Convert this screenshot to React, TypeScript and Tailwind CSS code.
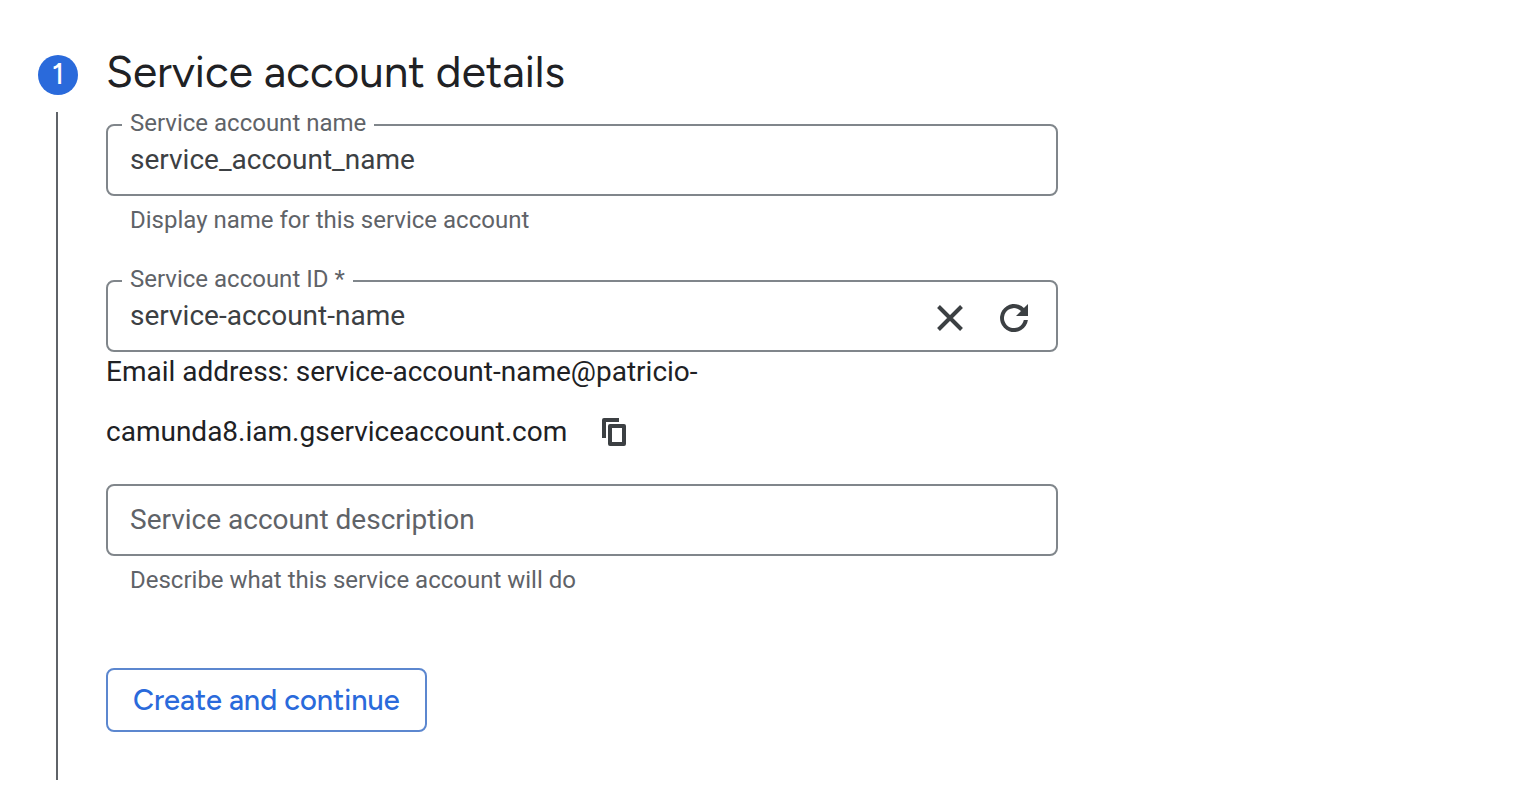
import { useState } from "react";
import type { ReactNode } from "react";

type FieldProps = {
  id: string;
  label: string;
  value: string;
  onChange: (value: string) => void;
  actions?: ReactNode;
};

function CloseIcon() {
  return (
    <svg viewBox="0 0 40 40" className="size-10" fill="none" stroke="#3c4043" strokeWidth="4" aria-hidden="true">
      <path d="M8.5 8.5 31.5 31.5M31.5 8.5 8.5 31.5" />
    </svg>
  );
}

function RefreshIcon() {
  return (
    <svg viewBox="0 0 40 40" className="size-10" fill="#3c4043" aria-hidden="true">
      <path d="M34 6V18H22L27 13A10 10 0 1 0 29.8 22H33.9A14 14 0 1 1 29.9 10.1Z" />
    </svg>
  );
}

function CopyIcon() {
  return (
    <svg viewBox="0 0 32 32" className="size-8" fill="none" stroke="#3c4043" strokeWidth="4" strokeLinejoin="round" aria-hidden="true">
      <path d="M20 4H5V22" />
      <path d="M11 10H25V28H11Z" />
    </svg>
  );
}

function OutlinedField({ id, label, value, onChange, actions }: FieldProps) {
  return (
    <fieldset className="-mt-[13px] h-[85px] min-w-0 rounded-lg border-2 border-[#80868b] pl-3.5 pr-[22px]">
      <legend className="h-7 px-2 text-2xl leading-6 text-[#5f6368]">
        <label htmlFor={id}>{label}</label>
      </legend>
      <div className="flex h-[46px] items-center pl-2">
        <input
          id={id}
          value={value}
          onChange={(e) => onChange(e.target.value)}
          className="min-w-0 flex-1 bg-transparent pb-1 text-[28px] leading-9 text-[#3c4043] outline-none"
        />
        {actions}
      </div>
    </fieldset>
  );
}

export default function App() {
  const [name, setName] = useState("service_account_name");
  const [accountId, setAccountId] = useState("service-account-name");
  const [description, setDescription] = useState("");

  return (
    <main className="flex gap-7 bg-white pt-10 pb-2 pl-[38px] pr-6 font-['Roboto',sans-serif] text-[#202124]">
      <div className="flex w-10 shrink-0 flex-col gap-[17px] pt-[15px]">
        <span className="flex size-10 items-center justify-center rounded-full bg-[#2a6adb] pb-0.5 font-['Google_Sans','Figtree','Lato',sans-serif] text-[29px] font-medium leading-10 text-white">
          1
        </span>
        <div className="ml-[18px] w-0.5 flex-1 bg-[#5f6368]" />
      </div>
      <form className="w-full max-w-[952px] pb-12" onSubmit={(e) => e.preventDefault()}>
        <h1 className="pb-5 font-['Google_Sans','Figtree','Lato',sans-serif] text-[44px] leading-16">
          Service account details
        </h1>
        <OutlinedField id="name" label="Service account name" value={name} onChange={setName} />
        <p className="pt-2 pl-6 text-2xl leading-8 text-[#5f6368]">
          Display name for this service account
        </p>
        <div className="pt-11">
          <OutlinedField
            id="account-id"
            label="Service account ID *"
            value={accountId}
            onChange={setAccountId}
            actions={
              <div className="flex gap-6">
                <button type="button" aria-label="Clear" onClick={() => setAccountId("")}>
                  <CloseIcon />
                </button>
                <button type="button" aria-label="Regenerate">
                  <RefreshIcon />
                </button>
              </div>
            }
          />
        </div>
        <div className="-mt-2.5 max-w-[640px] text-[28px] leading-[60px]">
          Email address: service-account-name@patricio-camunda8.iam.gserviceaccount.com
          <button type="button" aria-label="Copy email address" className="ml-8 pb-1 align-middle">
            <CopyIcon />
          </button>
        </div>
        <input
          aria-label="Service account description"
          placeholder="Service account description"
          value={description}
          onChange={(e) => setDescription(e.target.value)}
          className="mt-[22px] block h-[72px] w-full rounded-lg border-2 border-[#80868b] px-[22px] pb-0.5 text-[28px] text-[#3c4043] outline-none placeholder:text-[#5f6368]"
        />
        <p className="pt-2 pl-6 text-2xl leading-8 text-[#5f6368]">
          Describe what this service account will do
        </p>
        <button
          type="submit"
          className="mt-[72px] h-16 rounded-lg border-2 border-[#5c87cf] px-[25px] font-['Google_Sans','Figtree','Lato',sans-serif] text-[29px] font-medium text-[#2a6adb]"
        >
          Create and continue
        </button>
      </form>
    </main>
  );
}
